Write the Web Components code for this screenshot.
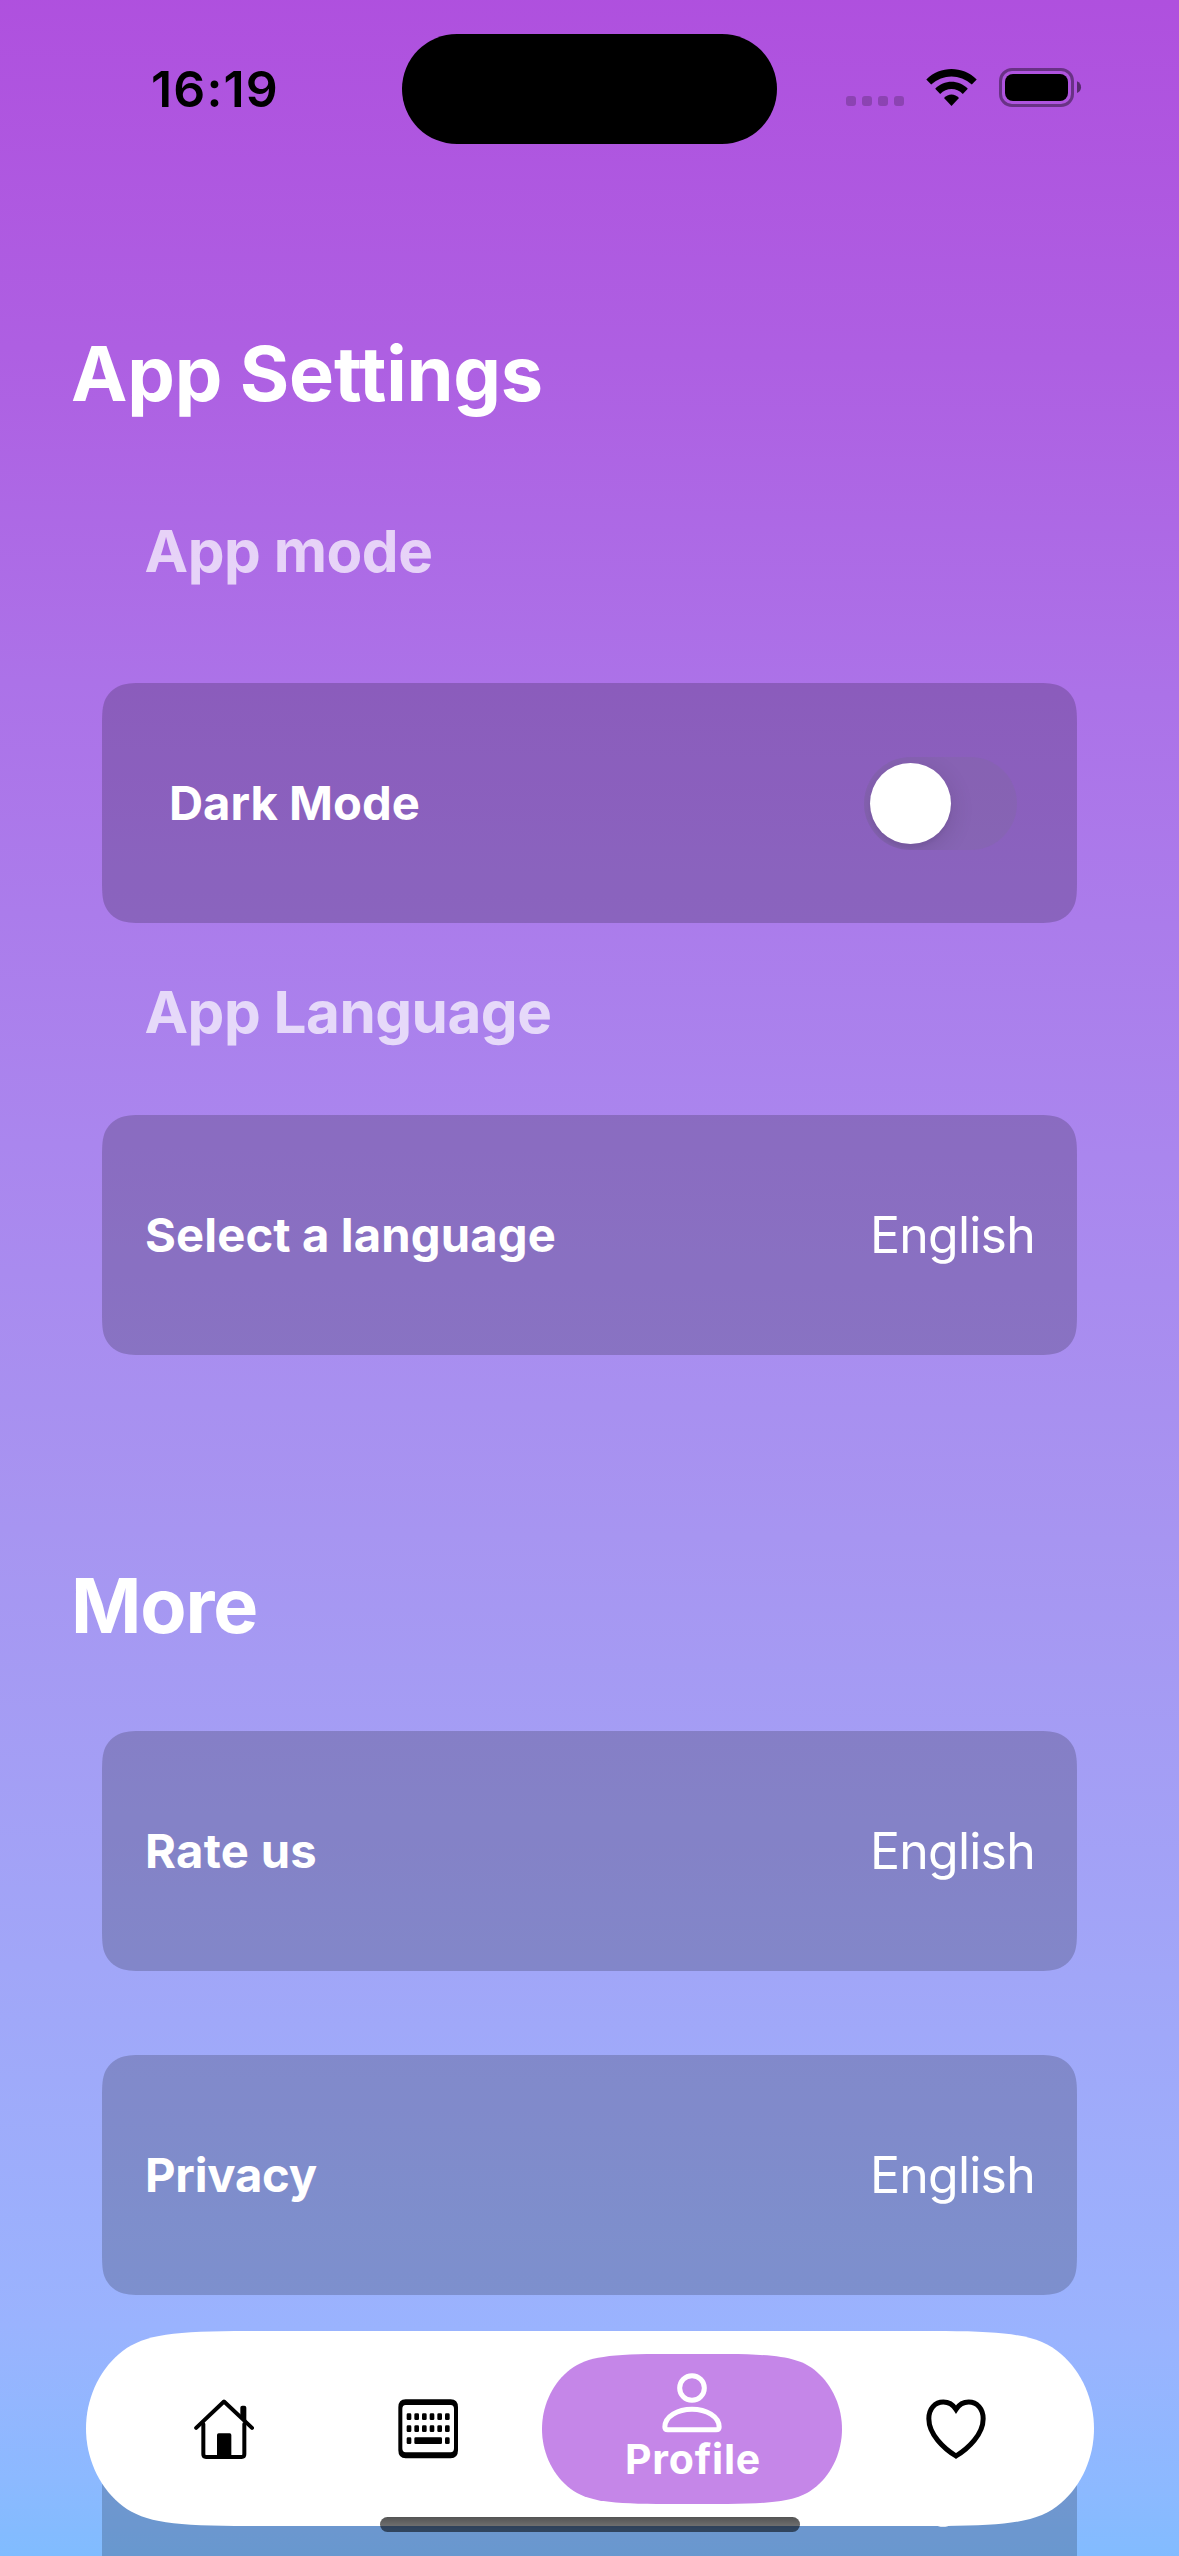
<!DOCTYPE html>
<html lang="en">
<head>
<meta charset="utf-8">
<title>App Settings</title>
<style>
  html, body { margin: 0; padding: 0; }
  body { width: 1179px; height: 2556px; overflow: hidden; font-family: Inter, "Liberation Sans", sans-serif; font-optical-sizing: none; font-variation-settings: "opsz" 14; font-variant-ligatures: none; }
</style>
</head>
<body>
<settings-screen></settings-screen>
<script>
const define = (name, html, extra) => {
  const tpl = document.createElement('template');
  tpl.innerHTML = html;
  customElements.define(name, class extends HTMLElement {
    constructor() {
      super();
      this.attachShadow({ mode: 'open' }).appendChild(tpl.content.cloneNode(true));
    }
    connectedCallback() { if (extra) extra(this, this.shadowRoot); }
  });
};

/* A line of text tracked to a given advance width. */
define('tracked-text', `
<style>:host{display:inline-block;white-space:nowrap;line-height:1.2}</style><slot></slot>`,
(el) => {
  const want = parseFloat(el.getAttribute('advance'));
  const text = el.textContent;
  const cs = getComputedStyle(el);
  const probe = document.createElement('span');
  probe.style.cssText = `position:absolute;visibility:hidden;white-space:nowrap;font-size:${cs.fontSize};font-weight:${cs.fontWeight}`;
  probe.textContent = text;
  document.body.appendChild(probe);
  const natural = probe.getBoundingClientRect().width;
  probe.remove();
  el.style.letterSpacing = ((want - natural) / text.length).toFixed(3) + 'px';
  el.style.width = want + 'px';
});

/* Panel with continuous-curvature corners. */
define('smooth-panel', `
<style>
:host{display:block;position:relative;isolation:isolate}
svg{position:absolute;inset:0;width:100%;height:100%;z-index:-1;display:block}
</style><svg preserveAspectRatio="none"><path/></svg><slot></slot>`,
(el, root) => {
  const w = +el.getAttribute('w'), h = +el.getAttribute('h'), r = el.getAttribute('r');
  let pts;
  if (r === 'capsule') {
    const k = h / 195;
    pts = [[149,0],[80,.5],[54,5],[33,23],[12,41],[0,69],[0,97.5]].map(p => [p[0]*k, p[1]*k]);
  } else {
    pts = [[1.52866,0],[1.08849,0],[.86841,0],[.63149,.07491],[.37282,.16906],[.16906,.37282],[.07491,.63149],[0,.86841],[0,1.08849],[0,1.52866]].map(p => [p[0]*r, p[1]*r]);
  }
  const rev = pts.slice().reverse();
  const corner = (list, fx, fy, cmd) => {
    const q = list.map(([x, y]) => (fx ? w - x : x).toFixed(2) + ' ' + (fy ? h - y : y).toFixed(2));
    return cmd + q[0] + 'C' + q.slice(1).join(' ');
  };
  const d = corner(pts, 1, 0, 'M') + corner(rev, 1, 1, 'L') + corner(pts, 0, 1, 'L') + corner(rev, 0, 0, 'L') + 'Z';
  root.querySelector('svg').setAttribute('viewBox', `0 0 ${w} ${h}`);
  const path = root.querySelector('path');
  path.setAttribute('d', d);
  path.setAttribute('fill', el.getAttribute('fill'));
});

define('status-bar', `
<style>
:host{display:flex;height:177px;box-sizing:border-box;padding:34px 98px 0 151px;align-items:flex-start;justify-content:space-between}
.time{height:110px;width:251px;display:flex;align-items:center;font-size:50px;font-weight:600;color:#000}
.island{width:375px;height:110px;border-radius:55px;background:#000}
.right{width:304px;height:110px;box-sizing:border-box;padding:34px 0 0 69px;}
.right svg{display:block}
</style>
<div class="time"><tracked-text advance="128">16:19</tracked-text></div>
<div class="island"></div>
<div class="right"><svg width="236" height="40" viewBox="846 68 236 40">
  <g fill="#000" fill-opacity=".2"><rect x="846" y="96" width="10" height="10" rx="3"/><rect x="862" y="96" width="10" height="10" rx="3"/><rect x="878" y="96" width="10" height="10" rx="3"/><rect x="894" y="96" width="10" height="10" rx="3"/></g>
  <path d="M926.3 79.5C940.5 65.6 962.5 65.6 976.7 79.5L971.8 84.6C959.8 73.8 943.2 73.8 931.2 84.6Z"/>
  <path d="M935.2 88.8C944.2 79.5 958.8 79.5 967.8 88.8L962.8 93.9C956.5 87.4 946.5 87.4 940.2 93.9Z"/>
  <path d="M944 98C948 93.3 955 93.3 959 98L951.5 106Z"/>
  <rect x="1000.5" y="69.5" width="72" height="36" rx="11.5" fill="none" stroke="#000" stroke-opacity=".4" stroke-width="3"/>
  <rect x="1005" y="74" width="63" height="27" rx="8"/>
  <path d="M1077 81.3C1082.4 83.4 1082.4 91 1077 93.1Z" fill-opacity=".5"/>
</svg></div>`);

define('section-title', `
<style>:host{display:flex;align-items:center;height:93px;padding-left:71px;font-size:75.6px;font-weight:700;color:#fff}</style><slot></slot>`);

define('group-label', `
<style>:host{display:flex;align-items:center;height:70px;padding-left:144.5px;font-size:58.4px;font-weight:700;color:rgba(255,255,255,.7)}</style><slot></slot>`);

define('toggle-switch', `
<style>
:host{display:flex;align-items:center;box-sizing:border-box;width:153px;height:93px;padding:0 6px;border-radius:47px;background:rgba(120,120,128,.16);overflow:hidden}
i{display:block;width:81px;height:81px;border-radius:50%;background:#fff;box-shadow:0 6px 24px rgba(0,0,0,.13),0 4px 3px rgba(0,0,0,.04)}
</style><i></i>`);

define('setting-row', `
<style>
:host{display:block;width:975px;height:240px;margin-left:102px;flex:none}
.row{display:flex;align-items:center;justify-content:space-between;height:240px;padding:0 42px 0 43px;color:#fff}
:host([inset]) .row{padding:0 60px 0 67px}
.name{font-size:47.2px;font-weight:700}
.value{font-size:50px;font-weight:370}
</style>
<smooth-panel w="975" h="240" r="30" fill="rgba(0,0,0,.19)"><div class="row"><span class="name"><slot></slot></span><span class="value"><slot name="value"></slot></span></div></smooth-panel>`);

define('tab-bar', `
<style>
:host{position:absolute;left:86px;top:2331px;width:1008px;height:195px;display:block}
.tabs{display:flex;align-items:center;height:195px;padding:0 108px}
svg{display:block;flex:none}
.keys{margin-left:144px}
smooth-panel.active{width:300px;height:150px;margin:0 84px;flex:none}
.pill{display:flex;flex-direction:column;align-items:center;padding-top:19px;color:#fff;font-size:41px;font-weight:700}
.pill svg{margin-bottom:2px}
.pill tracked-text{margin-left:2px}
</style>
<smooth-panel w="1008" h="195" r="capsule" fill="#fff"><div class="tabs">
  <svg width="60" height="60" viewBox="401 656 180 180" fill="none" stroke="#000" stroke-linecap="round" stroke-linejoin="round">
    <path d="M407.500 742.500 491 663.500 575 742.500" stroke-width="12"/>
    <path d="M429 731V822Q429 830 437 830H544Q552 830 552 822V731" stroke-width="12"/>
    <path d="M540 708V682Q540 676 546 676H552Q558 676 558 682V725Z" fill="#000" stroke="none"/>
    <path d="M470 830V764Q470 759 475 759H508Q513 759 513 764V830Z" fill="#000" stroke="none"/>
  </svg>
  <svg class="keys" width="60" height="60" viewBox="1013 656 180 180">
    <path fill-rule="evenodd" d="M1036 657H1171Q1193 657 1193 681V810Q1193 834 1171 834H1036Q1014 834 1014 810V681Q1014 657 1036 657ZM1036 674Q1026 674 1026 686V804Q1026 816 1036 816H1171Q1181 816 1181 804V686Q1181 674 1171 674Z"/>
    <g id="k"></g>
  </svg>
  <smooth-panel class="active" w="300" h="150" r="capsule" fill="#c586e8"><div class="pill">
    <svg width="60" height="60" viewBox="485.500 188 180 180" fill="none" stroke="#fff" stroke-width="15"><circle cx="575.500" cy="233" r="37"/><path d="M494 350C494 318 533 296.500 575.500 296.500S657 318 657 350Q657 358.500 648 358.500H503Q494 358.500 494 350Z"/></svg>
    <tracked-text advance="136">Profile</tracked-text>
  </div></smooth-panel>
  <svg width="60" height="60" viewBox="317 806 180 180" fill="none" stroke="#000" stroke-width="15"><path d="M407 977C370 954 325.500 912 325.500 865C325.500 835 344 815 369 815C386 815 398 823 407 837C416 823 428 815 445 815C470 815 488.500 835 488.500 865C488.500 912 444 954 407 977Z"/></svg>
</div></smooth-panel>`,
(el, root) => {
  const g = root.getElementById('k');
  const key = (x, y, w) => {
    const r = document.createElementNS('http://www.w3.org/2000/svg', 'rect');
    for (const [n, v] of Object.entries({ x, y, width: w, height: 20, rx: 4 })) r.setAttribute(n, v);
    g.appendChild(r);
  };
  for (const y of [699, 735]) for (let c = 0; c < 6; c++) key(1039 + c * 23, y, 14);
  key(1039, 771, 14); key(1062, 771, 83); key(1154, 771, 14);
});

define('home-indicator', `
<style>:host{position:absolute;left:380px;top:2517px;width:420px;height:15px;border-radius:7.5px;background:linear-gradient(rgba(0,0,0,.67),rgba(0,0,0,.57) 60%,rgba(0,0,0,.54))}</style>`);

define('settings-screen', `
<style>
:host{position:relative;display:flex;flex-direction:column;width:1179px;height:2556px;overflow:hidden;
 background:linear-gradient(180.6deg,#af50de 0%,#ae5fe2 14%,#ac72e8 27%,#aa86ee 45%,#a795f1 60%,#a1a6f8 77%,#9ab3fe 91%,#8cb9ff 97%,#80bcff 100%)}
status-bar,section-title,group-label{flex:none}
.t1{margin-top:151px}.l1{margin-top:95px}.r1{margin-top:97px}
.l2{margin-top:54px}.r2{margin-top:68px}
.t2{margin-top:205px}.r3{margin-top:78px}.r4{margin-top:84px}.r5{margin-top:83px}
</style>
<status-bar></status-bar>
<section-title class="t1"><tracked-text advance="472">App Settings</tracked-text></section-title>
<group-label class="l1"><tracked-text advance="288">App mode</tracked-text></group-label>
<setting-row class="r1" inset><tracked-text advance="251">Dark Mode</tracked-text><toggle-switch slot="value"></toggle-switch></setting-row>
<group-label class="l2"><tracked-text advance="407">App Language</tracked-text></group-label>
<setting-row class="r2"><tracked-text advance="411">Select a language</tracked-text><tracked-text slot="value" advance="165">English</tracked-text></setting-row>
<section-title class="t2"><tracked-text advance="186">More</tracked-text></section-title>
<setting-row class="r3"><tracked-text advance="172">Rate us</tracked-text><tracked-text slot="value" advance="165">English</tracked-text></setting-row>
<setting-row class="r4"><tracked-text advance="172">Privacy</tracked-text><tracked-text slot="value" advance="165">English</tracked-text></setting-row>
<setting-row class="r5"><span></span><tracked-text slot="value" advance="165">English</tracked-text></setting-row>
<tab-bar></tab-bar>
<home-indicator></home-indicator>`);
</script>
</body>
</html>
